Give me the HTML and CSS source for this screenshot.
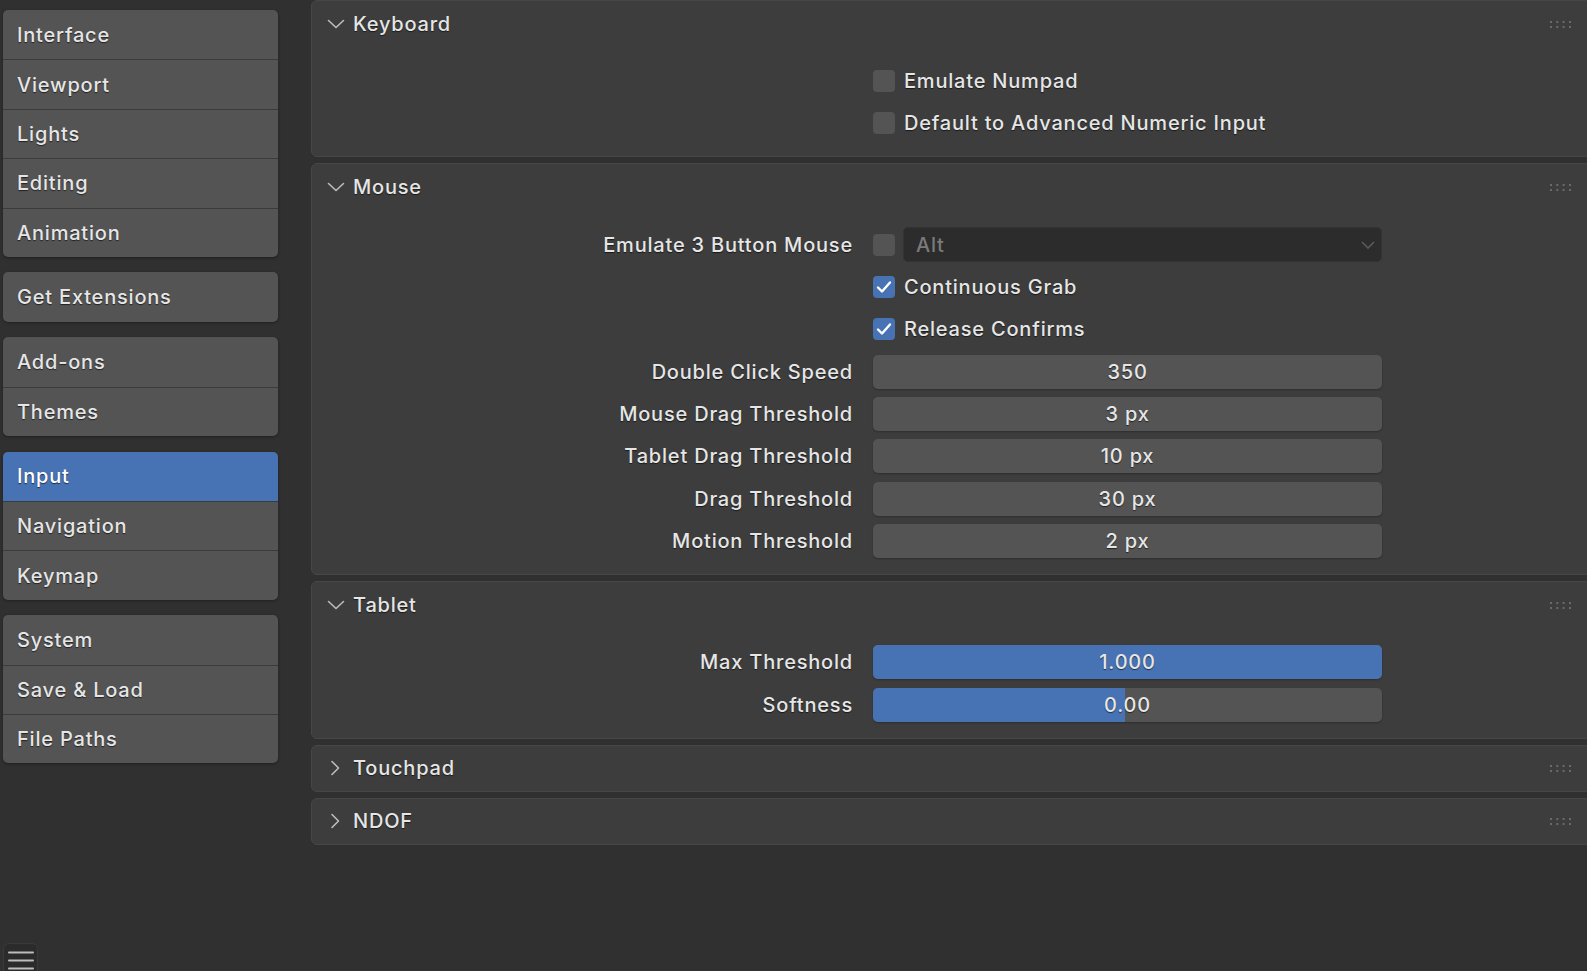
FILE: index.html
```html
<!DOCTYPE html>
<html lang="en">
<head>
  <meta charset="UTF-8">
  <meta name="viewport" content="width=device-width, initial-scale=1.0">
  <title>Preferences - Input</title>
  <link rel="stylesheet" href="styles.css">
</head>
<body>
  <div class="app">
    <nav class="sidebar">
      <div class="nav-group">
        <div class="nav-item">Interface</div>
        <div class="nav-item">Viewport</div>
        <div class="nav-item">Lights</div>
        <div class="nav-item">Editing</div>
        <div class="nav-item">Animation</div>
      </div>
      <div class="nav-group">
        <div class="nav-item">Get Extensions</div>
      </div>
      <div class="nav-group">
        <div class="nav-item">Add-ons</div>
        <div class="nav-item">Themes</div>
      </div>
      <div class="nav-group">
        <div class="nav-item active">Input</div>
        <div class="nav-item">Navigation</div>
        <div class="nav-item">Keymap</div>
      </div>
      <div class="nav-group">
        <div class="nav-item">System</div>
        <div class="nav-item">Save &amp; Load</div>
        <div class="nav-item">File Paths</div>
      </div>
    </nav>

    <main class="prefs">
      <!-- Keyboard -->
      <section class="panel">
        <header class="panel-head">
          <svg class="chev" width="18" height="10" viewBox="0 0 18 10"><path d="M1.5 1.5 L9 8.5 L16.5 1.5" /></svg>
          <span>Keyboard</span>
          <svg class="grip" width="21" height="7" viewBox="0 0 21 7"><g><rect x="0" y="0" width="2" height="2"/><rect x="6.3" y="0" width="2" height="2"/><rect x="12.6" y="0" width="2" height="2"/><rect x="19" y="0" width="2" height="2"/><rect x="0" y="5" width="2" height="2"/><rect x="6.3" y="5" width="2" height="2"/><rect x="12.6" y="5" width="2" height="2"/><rect x="19" y="5" width="2" height="2"/></g></svg>
        </header>
        <div class="panel-body">
          <div class="row">
            <span class="label"></span>
            <div class="check"><span class="box"></span>Emulate Numpad</div>
          </div>
          <div class="row">
            <span class="label"></span>
            <div class="check"><span class="box"></span>Default to Advanced Numeric Input</div>
          </div>
        </div>
      </section>

      <!-- Mouse -->
      <section class="panel">
        <header class="panel-head">
          <svg class="chev" width="18" height="10" viewBox="0 0 18 10"><path d="M1.5 1.5 L9 8.5 L16.5 1.5" /></svg>
          <span>Mouse</span>
          <svg class="grip" width="21" height="7" viewBox="0 0 21 7"><g><rect x="0" y="0" width="2" height="2"/><rect x="6.3" y="0" width="2" height="2"/><rect x="12.6" y="0" width="2" height="2"/><rect x="19" y="0" width="2" height="2"/><rect x="0" y="5" width="2" height="2"/><rect x="6.3" y="5" width="2" height="2"/><rect x="12.6" y="5" width="2" height="2"/><rect x="19" y="5" width="2" height="2"/></g></svg>
        </header>
        <div class="panel-body">
          <div class="row">
            <span class="label">Emulate 3 Button Mouse</span>
            <div class="combo">
              <span class="box"></span>
              <div class="dropdown">
                <span>Alt</span>
                <svg width="14" height="8" viewBox="0 0 14 8"><path d="M1 1 L7 7 L13 1" /></svg>
              </div>
            </div>
          </div>
          <div class="row">
            <span class="label"></span>
            <div class="check"><span class="box on"><svg width="16" height="14" viewBox="0 0 16 14"><path d="M2 7.5 L6 11.5 L14 2.5" /></svg></span>Continuous Grab</div>
          </div>
          <div class="row">
            <span class="label"></span>
            <div class="check"><span class="box on"><svg width="16" height="14" viewBox="0 0 16 14"><path d="M2 7.5 L6 11.5 L14 2.5" /></svg></span>Release Confirms</div>
          </div>
          <div class="row">
            <span class="label">Double Click Speed</span>
            <div class="field"><span class="value">350</span></div>
          </div>
          <div class="row">
            <span class="label">Mouse Drag Threshold</span>
            <div class="field"><span class="value">3 px</span></div>
          </div>
          <div class="row">
            <span class="label">Tablet Drag Threshold</span>
            <div class="field"><span class="value">10 px</span></div>
          </div>
          <div class="row">
            <span class="label">Drag Threshold</span>
            <div class="field"><span class="value">30 px</span></div>
          </div>
          <div class="row">
            <span class="label">Motion Threshold</span>
            <div class="field"><span class="value">2 px</span></div>
          </div>
        </div>
      </section>

      <!-- Tablet -->
      <section class="panel">
        <header class="panel-head">
          <svg class="chev" width="18" height="10" viewBox="0 0 18 10"><path d="M1.5 1.5 L9 8.5 L16.5 1.5" /></svg>
          <span>Tablet</span>
          <svg class="grip" width="21" height="7" viewBox="0 0 21 7"><g><rect x="0" y="0" width="2" height="2"/><rect x="6.3" y="0" width="2" height="2"/><rect x="12.6" y="0" width="2" height="2"/><rect x="19" y="0" width="2" height="2"/><rect x="0" y="5" width="2" height="2"/><rect x="6.3" y="5" width="2" height="2"/><rect x="12.6" y="5" width="2" height="2"/><rect x="19" y="5" width="2" height="2"/></g></svg>
        </header>
        <div class="panel-body">
          <div class="row">
            <span class="label">Max Threshold</span>
            <div class="field slider"><span class="fill" style="width: 100%"></span><span class="value">1.000</span></div>
          </div>
          <div class="row">
            <span class="label">Softness</span>
            <div class="field slider"><span class="fill" style="width: 49.5%"></span><span class="value">0.00</span></div>
          </div>
        </div>
      </section>

      <!-- Touchpad -->
      <section class="panel closed">
        <header class="panel-head">
          <svg class="chev" width="18" height="16" viewBox="0 0 18 16"><path d="M5 1.5 L11.5 8 L5 14.5" /></svg>
          <span>Touchpad</span>
          <svg class="grip" width="21" height="7" viewBox="0 0 21 7"><g><rect x="0" y="0" width="2" height="2"/><rect x="6.3" y="0" width="2" height="2"/><rect x="12.6" y="0" width="2" height="2"/><rect x="19" y="0" width="2" height="2"/><rect x="0" y="5" width="2" height="2"/><rect x="6.3" y="5" width="2" height="2"/><rect x="12.6" y="5" width="2" height="2"/><rect x="19" y="5" width="2" height="2"/></g></svg>
        </header>
      </section>

      <!-- NDOF -->
      <section class="panel closed">
        <header class="panel-head">
          <svg class="chev" width="18" height="16" viewBox="0 0 18 16"><path d="M5 1.5 L11.5 8 L5 14.5" /></svg>
          <span>NDOF</span>
          <svg class="grip" width="21" height="7" viewBox="0 0 21 7"><g><rect x="0" y="0" width="2" height="2"/><rect x="6.3" y="0" width="2" height="2"/><rect x="12.6" y="0" width="2" height="2"/><rect x="19" y="0" width="2" height="2"/><rect x="0" y="5" width="2" height="2"/><rect x="6.3" y="5" width="2" height="2"/><rect x="12.6" y="5" width="2" height="2"/><rect x="19" y="5" width="2" height="2"/></g></svg>
        </header>
      </section>
    </main>

    <button class="region-toggle" aria-label="Menu">
      <svg width="26" height="20" viewBox="0 0 26 20"><path d="M1 1.5 H25 M1 9.5 H25 M1 17.5 H25" /></svg>
    </button>
  </div>
</body>
</html>
```

FILE: styles.css
```css
* {
  margin: 0;
  padding: 0;
  box-sizing: border-box;
}

body {
  font-family: Inter, "DejaVu Sans", sans-serif;
  font-size: 20px;
  font-weight: 500;
  letter-spacing: 0.8px;
  background: #303030;
  color: #e6e6e6;
  height: 971px;
  overflow: hidden;
}

.app {
  display: flex;
  align-items: flex-start;
  height: 971px;
  position: relative;
}

/* sidebar */

.sidebar {
  width: 278px;
  flex: none;
  padding: 10px 0 0 3px;
  display: flex;
  flex-direction: column;
  gap: 15.5px;
}

.nav-group {
  background: #545454;
  border-radius: 5px;
  overflow: hidden;
  box-shadow: 0 1px 3px rgba(0, 0, 0, 0.35);
}

.nav-item {
  height: 49.4px;
  padding-left: 14px;
  display: flex;
  align-items: center;
  text-shadow: 0 1px 1px rgba(0, 0, 0, 0.6);
}

.nav-item + .nav-item {
  border-top: 1px solid #3b3b3b;
}

.nav-item.active {
  background: #4772b3;
  color: #ffffff;
}

/* main region */

.prefs {
  flex: none;
  width: 1280px;
  margin-left: 33px;
  padding-top: 1px;
}

.panel {
  background: #3d3d3d;
  border: 1px solid #474747;
  border-radius: 6px;
  margin-bottom: 6px;
}

.panel:first-child {
  margin-top: -1px;
}

.panel-head {
  height: 46px;
  display: flex;
  align-items: center;
  gap: 8px;
  padding: 0 19px 0 15px;
  text-shadow: 0 1px 1px rgba(0, 0, 0, 0.6);
}

.panel.closed .panel-head {
  height: 45px;
}

.chev {
  flex: none;
  fill: none;
  stroke: #bdbdbd;
  stroke-width: 1.6;
  stroke-linecap: round;
  stroke-linejoin: round;
}

.grip {
  margin-left: auto;
  fill: #6a6a6a;
}

.panel-body {
  padding: 17px 0 16px;
  display: flex;
  flex-direction: column;
  gap: 8.4px;
}

.row {
  display: grid;
  grid-template-columns: 541px 509px;
  column-gap: 20px;
  height: 34px;
  align-items: center;
}

.label {
  text-align: right;
  white-space: nowrap;
  text-shadow: 0 1px 1px rgba(0, 0, 0, 0.6);
}

/* checkboxes */

.check {
  display: flex;
  align-items: center;
  gap: 9px;
  white-space: nowrap;
  text-shadow: 0 1px 1px rgba(0, 0, 0, 0.6);
}

.box {
  width: 22px;
  height: 22px;
  flex: none;
  border-radius: 4px;
  background: #545454;
  display: flex;
  align-items: center;
  justify-content: center;
}

.box.on {
  background: #4772b3;
}

.box svg {
  fill: none;
  stroke: #ffffff;
  stroke-width: 2.4;
  stroke-linecap: round;
  stroke-linejoin: round;
}

.combo {
  display: flex;
  align-items: center;
  gap: 8px;
}

.dropdown {
  flex: 1;
  height: 35px;
  background: #2c2c2c;
  border: 1px solid #333333;
  border-radius: 5px;
  display: flex;
  align-items: center;
  justify-content: space-between;
  padding: 0 6px 0 12px;
  color: #7a7a7a;
}

.dropdown svg {
  fill: none;
  stroke: #5a5a5a;
  stroke-width: 1.6;
}

/* number fields */

.field {
  height: 34px;
  border-radius: 5px;
  background: #545454;
  display: flex;
  align-items: center;
  justify-content: center;
  position: relative;
  overflow: hidden;
  box-shadow: 0 1px 2px rgba(0, 0, 0, 0.25);
}

.field .fill {
  position: absolute;
  left: 0;
  top: 0;
  bottom: 0;
  background: #4772b3;
}

.field .value {
  position: relative;
  text-shadow: 0 1px 1px rgba(0, 0, 0, 0.6);
}

/* bottom-left region toggle */

.region-toggle {
  position: absolute;
  left: 3px;
  top: 943px;
  width: 35px;
  height: 36px;
  background: #2b2b2b;
  border: 1px solid #3a3a3a;
  border-radius: 6px;
  display: flex;
  justify-content: center;
  padding-top: 7px;
}

.region-toggle svg {
  fill: none;
  stroke: #bdbdbd;
  stroke-width: 2;
  stroke-linecap: round;
}
```
